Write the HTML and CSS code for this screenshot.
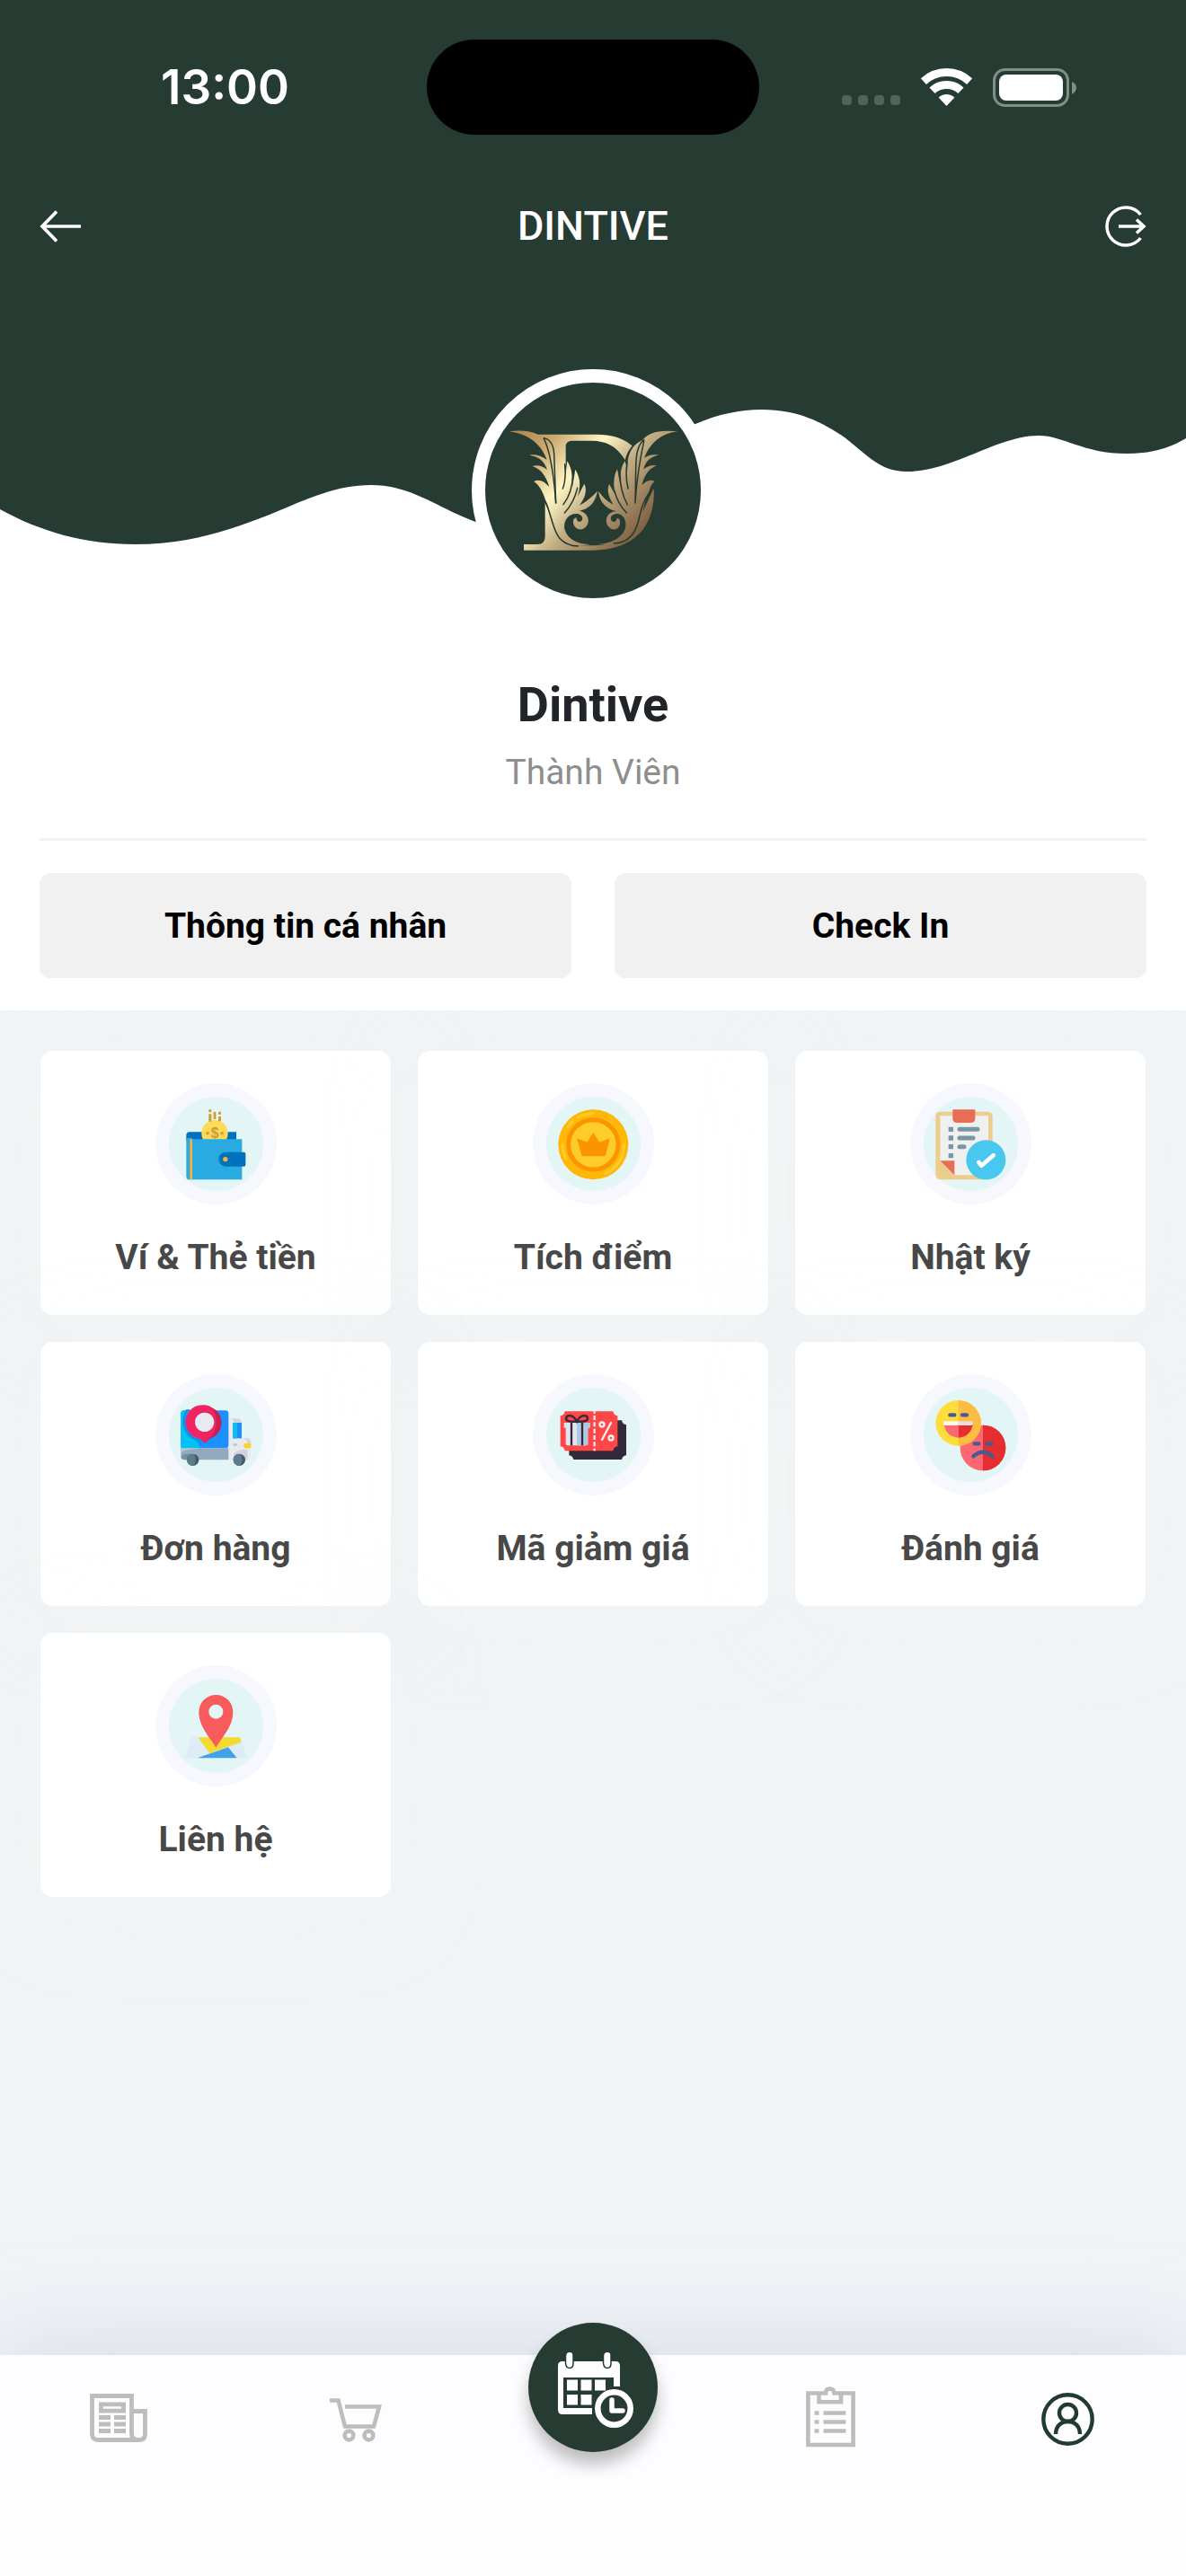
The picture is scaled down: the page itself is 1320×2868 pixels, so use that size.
FILE: index.html
```html
<!DOCTYPE html>
<html lang="vi">
<head>
<meta charset="utf-8">
<title>DINTIVE</title>
<link rel="stylesheet" href="styles.css">
</head>
<body>
<div class="app">
  <section class="profile">
    <svg class="wave" viewBox="0 0 1320 620" aria-hidden="true">
      <path d="M0 0H1320V488C1300 500 1280 505 1254 505C1205 505 1184 485 1156 485C1110 485 1060 525 1010 525C980 525 968 509 940 487C915 470 888 456 848 456C823 456 800 461 774 472L535 583C490 568 460 540 413 540C375 540 345 554 300 573C250 592 210 606 150 606C95 606 45 592 0 567Z"/>
    </svg>
    <div class="status-bar">
      <span class="clock">13:00</span>
      <span class="island"></span>
      <span class="indicators">
        <span class="signal"><i></i><i></i><i></i><i></i></span>
        <svg class="wifi" viewBox="0 0 57 42"><path d="M2.9 14.6A37.5 37.5 0 0 1 54.1 14.6M12.5 24.8A23.5 23.5 0 0 1 44.5 24.8" fill="none" stroke="#fff" stroke-width="9"/><path d="M28.5 42L19.6 32.5A13 13 0 0 1 37.4 32.5Z" fill="#fff"/></svg>
        <svg class="battery" viewBox="0 0 94 43"><rect x="1.5" y="1.5" width="82" height="40" rx="12" fill="none" stroke="#7f8f87" stroke-width="3"/><rect x="7" y="7" width="71" height="29" rx="8" fill="#fff"/><path d="M88 15Q93 17 93 21.500T88 29Z" fill="#7f8f87"/></svg>
      </span>
    </div>
    <div class="nav">
      <svg class="nav-back" viewBox="0 0 46 36"><path d="M19 1.500L3 18L19 34.500M3 18H46" fill="none" stroke="#fff" stroke-width="3.700"/></svg>
      <h1>DINTIVE</h1>
      <svg class="nav-exit" viewBox="0 0 46 46"><path d="M39.500 10A21 21 0 1 0 39.500 36" fill="none" stroke="#fff" stroke-width="3.500"/><path d="M15 23H43M35 15.500L43 23L35 30.500" fill="none" stroke="#fff" stroke-width="3.500"/></svg>
    </div>
    <div class="avatar">
      <svg viewBox="60 78 720 720">
        <defs><linearGradient id="gold" gradientUnits="userSpaceOnUse" x1="200" y1="220" x2="600" y2="580"><stop offset="0" stop-color="#b18c55"/><stop offset=".17" stop-color="#c9a76d"/><stop offset=".41" stop-color="#fff6c4"/><stop offset=".62" stop-color="#c2ad83"/><stop offset="1" stop-color="#79593c"/></linearGradient></defs>
        <g fill="url(#gold)">
          <path d="M235 251H430C490 251 525 267 551 289C539 303 531 320 527 337C502 292 465 272 415 272H350Q329 272 329 292V352L300 400L250 275Z"/>
          <path d="M260 478C276 510 282 560 310 600C324 618 345 622 370 622H430C550 622 590 500 623 430C630 565 550 638 420 638H189V618H235Q260 618 260 592Z"/>
          <path d="M140 241C205 232 250 247 278 288C318 310 326 350 328 385L334 340C350 365 355 400 350 435L361 368C381 400 378 430 368 460L391 416C402 440 393 464 375 488C400 474 418 458 435 440C428 480 405 501 374 506C401 511 411 536 400 555C385 579 353 568 354 541C355 533 360 530 364 529C366 540 371 546 380 541C391 532 382 516 364 516C333 516 319 547 326 570C336 603 370 617 410 618C350 630 310 620 290 565C278 535 277 500 262 472C253 445 242 420 222 408C240 399 256 406 274 426C262 385 242 365 217 357C235 351 253 358 267 369C256 337 237 326 208 320C229 316 250 323 266 336C248 286 208 250 140 241Z"/>
          <path d="M702 241C640 234 605 245 584 271C547 287 532 325 535 372L527 340C511 360 509 395 513 430L501 367C486 395 488 425 496 455L474 417C464 440 475 465 488 485C465 474 452 459 438 440C442 480 468 502 498 507C467 510 458 536 469 556C486 580 514 566 510 540C509 532 504 531 500 530C499 541 490 547 482 539C474 528 484 516 502 516C530 519 534 554 525 572C511 602 470 617 430 618C515 625 553 605 576 550C587 510 594 464 605 450C610 430 616 414 626 408C611 399 596 408 583 421C592 385 608 365 632 355C616 352 602 358 589 367C596 339 612 326 640 320C617 316 603 321 591 330C609 281 647 248 702 241Z"/>
        </g>
        <g fill="none" stroke="#263a32" stroke-width="4.500" stroke-linecap="round">
          <path d="M256 263C275 266 288 285 290 315L296 480"/><path d="M256 265Q284 320 296 480M326 350Q331 400 319 432M352 375Q355 440 321 485M368 430Q356 480 325 513"/>
          <path d="M590 269C565 290 564 330 563 360L561 480M590 274Q567 380 561 480M534 345Q527 390 537 432M510 380Q510 440 535 486M492 440Q502 482 532 513"/>
          <path d="M262 480C282 520 285 570 308 597C325 616 345 624 370 624M622 430C590 460 581 500 571 543C558 590 530 614 490 615"/>
        </g>
      </svg>
    </div>
    <h2 class="name">Dintive</h2>
    <p class="role">Thành Viên</p>
    <div class="actions">
      <button>Thông tin cá nhân</button>
      <button>Check In</button>
    </div>
  </section>

  <main class="grid">
    <a class="card">
      <svg class="icon" viewBox="38 47 405 405"><circle class="halo" cx="240.500" cy="249.500" r="202.500"/><circle class="disc" cx="240.500" cy="249.500" r="157.500"/>
        <path d="M152 210H308V240H141V221Q141 210 152 210Z" fill="#0070bf"/><circle cx="236" cy="214" r="44" fill="#ffda57"/><g fill="#cc9c35"><path d="M216 135h9v9h-9zM216 150h9v25h-9zM232 143h8v24h-8zM248 142h9v9h-9zM248 158h9v16h-9zM207 210h10v9h-10zM255 210h10v9h-10z"/></g><text x="236" y="229" font-family="Liberation Sans" font-size="47" font-weight="700" text-anchor="middle" fill="#cc9c35">$</text>
        <path d="M141 234H327V369H152Q141 369 141 358Z" fill="#29abe2"/><path d="M141 230h20v7h-20z" fill="#29abe2"/><path d="M153 234h8v135h-8z" fill="#fbb03b"/><path d="M273 277H333Q339 277 339 283V319Q339 325 333 325H273A24 24 0 0 1 273 277Z" fill="#0071bc"/><circle cx="271.500" cy="301" r="8" fill="#fbb03b"/>
      </svg><span>Ví &amp; Thẻ tiền</span></a>
    <a class="card">
      <svg class="icon" viewBox="38 47 405 405"><circle class="halo" cx="240.500" cy="249.500" r="202.500"/><circle class="disc" cx="240.500" cy="249.500" r="157.500"/>
        <circle cx="240" cy="252" r="117" fill="#ffb805"/><circle cx="240" cy="252" r="83" fill="#ffcc29" stroke="#fa9500" stroke-width="15"/><path d="M185 231L219 244L240 212L261 244L295 231L280 291H202Z" fill="#fa9500"/><path d="M189 161Q211 149 240 148M155 194Q161 184 170 175M137 252Q137 277 149 300M343 252Q340 320 280 349" fill="none" stroke="#ffcc29" stroke-width="9" stroke-linecap="round"/>
      </svg><span>Tích điểm</span></a>
    <a class="card">
      <svg class="icon" viewBox="38 47 405 405"><circle class="halo" cx="240.500" cy="249.500" r="202.500"/><circle class="disc" cx="240.500" cy="249.500" r="157.500"/>
        <rect x="123" y="142" width="190" height="227" rx="15" fill="#eccd8e"/><path d="M138 156H299V354H186L138 306Z" fill="#f0f0f0"/><path d="M180 135H255V165Q255 179 241 179H194Q180 179 180 165Z" fill="#e76e54"/><path d="M138 306H186V354Z" fill="#e76e54"/><path d="M166 193h16v16h-16zM166 222h16v16h-16zM166 251h16v16h-16zM166 281h16v16h-16z" fill="#7897a1"/><path d="M203 201H263M203 230H248M203 259H218" stroke="#7897a1" stroke-width="15" stroke-linecap="round"/><circle cx="291" cy="303" r="66" fill="#48c7ef"/><path d="M267 311L276 322L316 288" fill="none" stroke="#fff" stroke-width="14" stroke-linecap="round" stroke-linejoin="round"/>
      </svg><span>Nhật ký</span></a>
    <a class="card">
      <svg class="icon" viewBox="38 44 405 405"><circle class="halo" cx="240.500" cy="246.500" r="202.500"/><circle class="disc" cx="240.500" cy="246.500" r="157.500"/>
        <path d="M282 192H311Q326 192 326 207V258H343Q357 258 357 273V316Q357 330 343 330H282Z" fill="#e9e9ef"/><path d="M311 192Q326 192 326 207H300Q300 192 285 192ZM343 258Q357 258 357 275H345Q343 258 325 258Z" fill="#d5d5df"/><path d="M297 206H326V258H297Z" fill="#1e8fff"/><path d="M297 206H311V258H297Z" fill="#08bff0"/><rect x="123" y="165" width="159" height="126" rx="11" fill="#1e8fff"/><path d="M134 165H153Q135 174 134 207C134 250 170 266 187 275Q193 291 180 299H123V176Q123 165 134 165Z" fill="#00c3f5"/><path d="M153 165H143C127 190 130 230 153 250C171 263 190 262 187 285" fill="none" stroke="#168bea" stroke-width="7"/>
        <path d="M123 291H282V330H138Q123 330 123 315Z" fill="#92aabf"/><path d="M123 306C145 290 160 298 187 291H123Z" fill="#b7cad9"/><path d="M123 320Q130 310 145 310H160V330H138Q125 330 123 320Z" fill="#7891a4"/><path d="M300 310Q318 291 345 298V330H300Z" fill="#d0d1dc"/><path d="M333 283A7.500 7.500 0 0 1 341 275H357V291H341Q333 291 333 283Z" fill="#ffd21f"/><rect x="297" y="276" width="15" height="7" rx="3.500" fill="#b8cada"/>
        <circle cx="163" cy="330" r="20" fill="#405c69"/><path d="M163 310A20 20 0 0 0 163 350Q172 345 172 330T163 310Z" fill="#5d7c8c"/><circle cx="318" cy="330" r="20" fill="#405c69"/><path d="M318 310A20 20 0 0 0 318 350Q327 345 327 330T318 310Z" fill="#5d7c8c"/>
        <path d="M203 274L188 260A56 56 0 1 1 218 260Z" fill="#c81e54"/><path d="M203 274L188 260A56 56 0 0 1 203 147C228 147 241 174 241 203C241 233 228 253 215 257Z" fill="#f22361"/><circle cx="202" cy="204" r="32" fill="#e9e9f1"/>
      </svg><span>Đơn hàng</span></a>
    <a class="card">
      <svg class="icon" viewBox="38 44 405 405"><circle class="halo" cx="240.500" cy="246.500" r="202.500"/><circle class="disc" cx="240.500" cy="246.500" r="157.500"/>
        <path d="M174 198H335Q337 211 350 213V315Q337 317 335 329H174Q172 317 159 315V213Q172 211 174 198Z" fill="#34283c"/><path d="M145 168H306Q308 181 321 183V285Q308 287 306 300H145Q143 287 130 285V183Q143 181 145 168Z" fill="#ff4747"/><path d="M244 168V300" stroke="#eee" stroke-width="7" stroke-dasharray="15 7" stroke-dashoffset="8"/><path d="M148 221H222V275Q222 282 215 282H155Q148 282 148 275Z" fill="#e1e6ec"/><path d="M185 221H222V275Q222 282 215 282H185Z" fill="#acc9e3"/><path d="M142 206h87v17h-87z" fill="#dde4ee"/><path d="M185 206h44v17h-44z" fill="#acc9e3"/><path d="M167 206V282M203 206V282" stroke="#34283c" stroke-width="7"/><path d="M185 202C160 203 148 200 149 191C151 178 173 178 185 202C197 178 220 178 221 191C222 200 210 203 185 202Z" fill="none" stroke="#34283c" stroke-width="7"/><g fill="none" stroke="#f4f2f4" stroke-width="7"><circle cx="269" cy="212" r="7.500"/><circle cx="299" cy="257" r="7.500"/><path d="M299 206L269 263" stroke-linecap="round"/></g>
      </svg><span>Mã giảm giá</span></a>
    <a class="card">
      <svg class="icon" viewBox="38 44 405 405"><circle class="halo" cx="240.500" cy="246.500" r="202.500"/><circle class="disc" cx="240.500" cy="246.500" r="157.500"/>
        <circle cx="281" cy="290" r="76" fill="#fd6771"/><path d="M281 214A76 76 0 0 1 281 366Z" fill="#e52e30"/><path d="M253 276H267M294 276H309M249 318Q281 290 313 318" fill="none" stroke="#485b91" stroke-width="13" stroke-linecap="round"/><circle cx="199" cy="207" r="76" fill="#ffdc3e"/><path d="M199 131A76 76 0 0 1 199 283Z" fill="#ffbc42"/><path d="M151 212H199V256Q158 253 151 212Z" fill="#fd6771"/><path d="M199 212H247Q240 253 199 256Z" fill="#e52e30"/><path d="M157 201H199V215H157Q149 215 149 208T157 201Z" fill="#fff6ec"/><path d="M199 201H241Q248 201 248 208T241 215H199Z" fill="#ecdfd9"/><path d="M171 180H186M212 180H227" stroke="#485b91" stroke-width="13" stroke-linecap="round"/>
      </svg><span>Đánh giá</span></a>
    <a class="card">
      <svg class="icon" viewBox="38 41 405 405"><circle class="halo" cx="240.500" cy="243.500" r="202.500"/><circle class="disc" cx="240.500" cy="243.500" r="157.500"/>
        <path d="M159 282H321L345 351H135Z" fill="#deedf5"/><path d="M180 282H320L325 298L219 335Z" fill="#f3da2e"/><path d="M178 351L281 315L310 351Z" fill="#41a2e8"/><path d="M240 316C220 281 183 247 183 197A57 57 0 0 1 297 197C297 247 260 281 240 316Z" fill="#f75b5b"/><circle cx="240" cy="196" r="24" class="disc"/>
      </svg><span>Liên hệ</span></a>
  </main>

  <nav class="tabs">
    <a class="tab tab-news"><svg width="64" height="54" viewBox="0 0 64 54" fill="none" stroke="#bdbdbd" stroke-width="4.800"><path d="M46.500 19.500H61.500V45Q61.500 51.500 55 51.500H9Q2.500 51.500 2.500 45V2.500H46.500V45Q46.500 51.500 54 51.500"/><path d="M10 11.800H40M10 19.200H40M12.500 9.500V21M37.500 9.500V21M10 26.500H23M27 26.500H40M10 34H23M27 34H40M10 41.500H23M27 41.500H40"/></svg></a>
    <a class="tab tab-cart"><svg width="58" height="49" viewBox="0 0 58 49" fill="none" stroke="#bdbdbd" stroke-width="4.600"><path d="M0 2.500H9.500L17 31.500H49L55 9.500H17"/><circle cx="21.500" cy="41.500" r="4.900"/><circle cx="43.500" cy="41.500" r="4.900"/></svg></a>
    <a class="tab tab-main"><svg width="84" height="84" viewBox="0 0 84 84"><path d="M5 10H64Q69 10 69 15V38H62V28H6V62H38V69H5Q0 69 0 64V15Q0 10 5 10Z" fill="#fff"/><path d="M10 30.500h12v12h-12zM25.500 30.500h12v12h-12zM41 30.500h12v12h-12zM10 47h12v11.500h-12zM25.500 47h12v11.500h-12z" fill="#fff"/><g fill="#fff" stroke="#263b32" stroke-width="1.500"><path d="M8.500 4Q8.500-.7 13-.7T17 4V12Q17 17.500 13 17.500T8.500 12ZM50.500 4Q50.500-.7 55-.7T59 4V12Q59 17.500 55 17.500T50.500 12Z"/></g><circle cx="62.500" cy="62.500" r="18.200" fill="#263b32" stroke="#fff" stroke-width="6.500"/><path d="M60 53V65H72" fill="none" stroke="#fff" stroke-width="5.500" stroke-linecap="round" stroke-linejoin="round"/></svg></a>
    <a class="tab tab-orders"><svg width="55" height="68" viewBox="0 0 55 68" fill="none" stroke="#bdbdbd" stroke-width="4.600"><path d="M13 7.500H2.400V65H52.600V7.500H40"/><path d="M14.500 7.500V17.300H39V7.500H31.500Q31 2.500 26.500 2.500T22 7.500Z"/><path d="M9.500 29.500H14.500M19.500 29.500H44.500M9.500 39.500H14.500M19.500 39.500H44.500M9.500 49.500H14.500M19.500 49.500H44.500"/></svg></a>
    <a class="tab"><svg width="59" height="59" viewBox="0 0 59 59" fill="none" stroke="#223b31" stroke-width="4.400"><circle cx="29.500" cy="29.500" r="27.200"/><circle cx="29.500" cy="22.500" r="9.500"/><path d="M16 46C16 37 22 32 29.500 32S43 37 43 46"/></svg></a>
  </nav>
  <div class="safe-area"></div>
</div>
</body>
</html>
```

FILE: styles.css
```css
* { box-sizing: border-box; }
body { margin: 0; background: #fefefe; font-family: Roboto, "Noto Sans", sans-serif; }
h1, h2, p { margin: 0; }
svg { display: block; }

.app { width: 1320px; height: 2868px; display: flex; flex-direction: column; overflow: hidden; background: #fefefe; }

.profile { position: relative; z-index: 0; height: 1125px; flex: none; padding: 0 44px; display: flex; flex-direction: column; align-items: center; background: #fff; }
.wave { position: absolute; z-index: -1; top: 0; left: 0; width: 1320px; height: 620px; fill: #263b32; }

.status-bar { width: 100%; height: 150px; padding-top: 44px; display: grid; grid-template-columns: 431px 370px 431px; align-items: center; }
.clock { padding-left: 135px; padding-bottom: 1px; color: #fff; font: 600 53px/60px Inter, sans-serif; letter-spacing: 0; }
.island { width: 370px; height: 106px; border-radius: 53px; background: #000; }
.indicators { display: flex; align-items: center; padding-left: 92px; }
.signal { display: flex; gap: 7px; padding-top: 28px; }
.signal i { width: 11px; height: 11px; border-radius: 4px; background: #52635b; }
.wifi { width: 57px; height: 42px; margin-left: 23px; }
.battery { width: 94px; height: 43px; margin-left: 23px; }

.nav { width: 100%; height: 60px; margin-top: 72px; display: flex; align-items: center; justify-content: space-between; }
.nav-back { width: 46px; height: 36px; }
.nav-exit { width: 46px; height: 46px; }
.nav h1 { color: #fff; font-size: 45px; font-weight: 500; line-height: 60px; }

.avatar { width: 270px; height: 270px; margin-top: 129px; border: 15px solid #fff; border-radius: 50%; overflow: hidden; background: #263b32; }
.name { margin-top: 69px; color: #212529; font-size: 54px; font-weight: 700; line-height: 70px; }
.role { margin-top: 15px; color: #8e8e8e; font-size: 39px; line-height: 50px; }
.actions { width: 100%; margin-top: 48px; padding-top: 36px; border-top: 3px solid #f1f1f7; display: grid; grid-template-columns: 1fr 1fr; gap: 48px; }
.actions button { height: 117px; border: 0; border-radius: 12px; background: #f1f1f1; color: #000; font: 700 39px/50px Roboto, sans-serif; }

.grid { flex: none; height: 1497px; padding: 45px; display: grid; grid-template-columns: repeat(3, 390px); grid-auto-rows: 294px; gap: 30px; align-content: start; background: #f0f4f7; }
.card { display: flex; flex-direction: column; align-items: center; padding-top: 36px; border-radius: 14px; background: #fff; color: #484848; font-size: 39px; font-weight: 700; line-height: 50px; box-shadow: 0 12px 100px rgba(250, 250, 242, .25); }
.card span { margin-top: 34px; }
.icon { width: 135px; height: 135px; }
.halo { fill: #f6f8fd; }
.disc { fill: #e3f5f5; }

.tabs { position: relative; flex: none; height: 144px; display: grid; grid-template-columns: repeat(5, 264px); background: #fdfcff; box-shadow: 0 0 110px rgba(190, 190, 208, .55); }
.tab { height: 142px; display: flex; align-items: center; justify-content: center; }
.tab-news { padding-bottom: 2px; }
.tab-cart { padding-top: 3px; }
.tab-orders { padding-bottom: 5px; }
.tab-main { width: 144px; height: 144px; margin: -36px auto 0; border-radius: 50%; background: #263b32; box-shadow: 0 14px 18px rgba(0, 0, 0, .25); }
.tab-main svg { margin-left: 6px; margin-top: 6px; }
.safe-area { position: relative; flex: 1; background: #fefefe; }
```
